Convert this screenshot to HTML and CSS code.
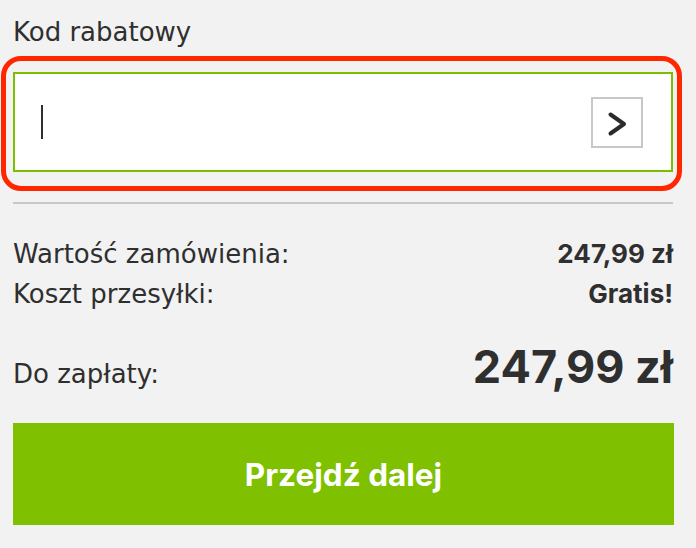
FILE: index.html
```html
<!DOCTYPE html>
<html lang="pl">
<head>
<meta charset="utf-8">
<link rel="stylesheet" href="styles.css">
</head>
<body>
<div class="panel">
  <div class="label">Kod rabatowy</div>
  <div class="field-wrap">
    <div class="field">
      <span class="caret"></span>
      <button class="apply" type="button" aria-label="Zastosuj">
        <svg width="48" height="47" viewBox="0 0 48 47"><polyline points="17.5,15.5 31,25 17.5,34.5" fill="none" stroke="#2b2b2b" stroke-width="4" stroke-linecap="round" stroke-linejoin="round"/></svg>
      </button>
    </div>
    <div class="highlight"></div>
  </div>
  <div class="divider"></div>
  <div class="rows">
    <div class="row"><span class="name">Wartość zamówienia:</span><span class="value">247,99 zł</span></div>
    <div class="row"><span class="name">Koszt przesyłki:</span><span class="value">Gratis!</span></div>
  </div>
  <div class="row total"><span class="name">Do zapłaty:</span><span class="value big">247,99 zł</span></div>
  <button class="next" type="button">Przejdź dalej</button>
</div>
</body>
</html>
```
FILE: styles.css
```css
html, body {
  margin: 0;
  background: #f2f2f2;
}
.panel {
  padding: 17px 23px 0 13px;
  color: #2f2f2f;
  font-family: "DejaVu Sans", sans-serif;
}
.label {
  font-size: 26px;
  line-height: 30px;
}
.field-wrap {
  position: relative;
  margin-top: 25px;
}
.field {
  box-sizing: border-box;
  height: 100px;
  background: #fff;
  border: 2px solid #7dbf00;
  display: flex;
  align-items: center;
  justify-content: space-between;
  padding: 0 28px 0 26px;
}
.caret {
  width: 2px;
  height: 34px;
  background: #2f2f2f;
}
.apply {
  box-sizing: border-box;
  width: 52px;
  height: 51px;
  margin: 0;
  padding: 0;
  border: 2px solid #c8c8c8;
  background: #fff;
  display: flex;
}
.highlight {
  position: absolute;
  top: -16px;
  left: -12px;
  right: -9px;
  bottom: -19px;
  border: 5px solid #ff2600;
  border-radius: 20px;
  pointer-events: none;
}
.divider {
  margin-top: 30px;
  height: 2px;
  background: #c8c8c8;
}
.rows {
  margin-top: 30px;
}
.row {
  display: flex;
  justify-content: space-between;
  align-items: baseline;
}
.name {
  font-size: 26px;
  line-height: 40px;
}
.value {
  font-family: "Inter", sans-serif;
  font-weight: 700;
  font-size: 26px;
  line-height: 40px;
}
.total {
  margin-top: 27px;
}
.value.big {
  font-size: 45px;
  line-height: 52px;
}
.next {
  display: block;
  box-sizing: border-box;
  width: 661px;
  height: 102px;
  margin: 29px 0 0;
  padding: 0;
  border: 0;
  background: #7fc100;
  color: #fff;
  font-family: "Inter", sans-serif;
  font-weight: 700;
  font-size: 31.5px;
}
```
